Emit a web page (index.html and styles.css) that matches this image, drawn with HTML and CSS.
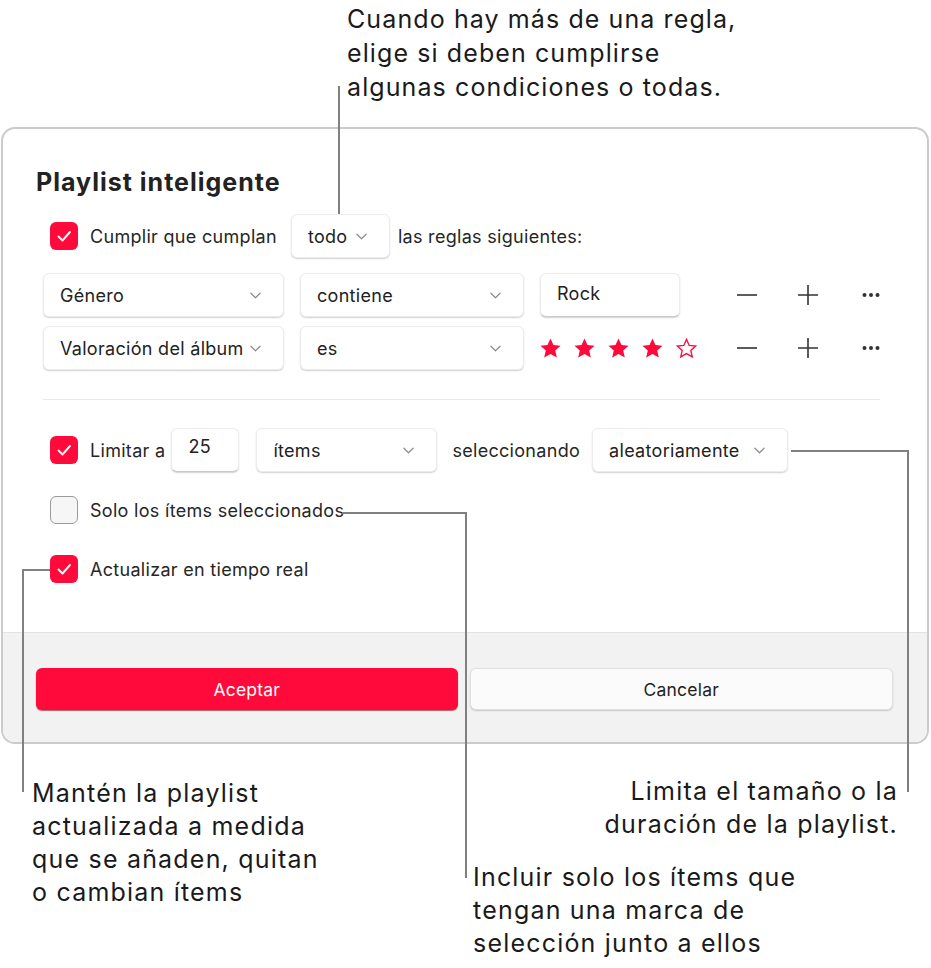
FILE: index.html
```html
<!DOCTYPE html>
<html lang="es">
<head>
<meta charset="utf-8">
<title>Playlist inteligente</title>
<link rel="stylesheet" href="styles.css">
</head>
<body>
<div class="page">
  <div class="callout-top">Cuando hay más de una regla,<br>elige si deben cumplirse<br>algunas condiciones o todas.</div>

  <div class="dialog">
    <div class="main">
      <h1 class="title">Playlist inteligente</h1>

      <div class="row row-match">
        <span class="check on"><svg viewBox="0 0 28 28"><path d="M8.5 14.5l4 4 7.5-8.5"/></svg></span>
        <span class="label lbl-first">Cumplir que cumplan</span>
        <span class="select sel-todo"><span>todo</span><svg class="chev" viewBox="0 0 12 7"><path d="M1 1l5 5 5-5"/></svg></span>
        <span class="label lbl-rules">las reglas siguientes:</span>
      </div>

      <div class="rules">
        <div class="rule">
          <span class="select sel-field"><span>Género</span><svg class="chev" viewBox="0 0 12 7"><path d="M1 1l5 5 5-5"/></svg></span>
          <span class="select sel-op"><span>contiene</span><svg class="chev" viewBox="0 0 12 7"><path d="M1 1l5 5 5-5"/></svg></span>
          <span class="field field-rock">Rock</span>
          <span class="actions">
            <svg class="ico minus" viewBox="0 0 20 20"><path d="M0 10h20"/></svg>
            <svg class="ico plus" viewBox="0 0 20 20"><path d="M0 10h20M10 0v20"/></svg>
            <svg class="ico dots" viewBox="0 0 18 6"><circle cx="2.5" cy="3" r="2"/><circle cx="9" cy="3" r="2"/><circle cx="15.5" cy="3" r="2"/></svg>
          </span>
        </div>
        <div class="rule">
          <span class="select sel-field"><span>Valoración del álbum</span><svg class="chev" viewBox="0 0 12 7"><path d="M1 1l5 5 5-5"/></svg></span>
          <span class="select sel-op"><span>es</span><svg class="chev" viewBox="0 0 12 7"><path d="M1 1l5 5 5-5"/></svg></span>
          <span class="stars">
            <svg class="star" viewBox="0 0 24 24"><path d="M12 1.5l3.1 6.9 7.4.7-5.6 5 1.7 7.4L12 17.7l-6.6 3.8 1.7-7.4-5.6-5 7.4-.7z"/></svg>
            <svg class="star" viewBox="0 0 24 24"><path d="M12 1.5l3.1 6.9 7.4.7-5.6 5 1.7 7.4L12 17.7l-6.6 3.8 1.7-7.4-5.6-5 7.4-.7z"/></svg>
            <svg class="star" viewBox="0 0 24 24"><path d="M12 1.5l3.1 6.9 7.4.7-5.6 5 1.7 7.4L12 17.7l-6.6 3.8 1.7-7.4-5.6-5 7.4-.7z"/></svg>
            <svg class="star" viewBox="0 0 24 24"><path d="M12 1.5l3.1 6.9 7.4.7-5.6 5 1.7 7.4L12 17.7l-6.6 3.8 1.7-7.4-5.6-5 7.4-.7z"/></svg>
            <svg class="star empty" viewBox="0 0 24 24"><path d="M12 2.5l2.8 6.3 6.8.6-5.1 4.6 1.5 6.8L12 17.3l-6 3.5 1.5-6.8-5.1-4.6 6.8-.6z"/></svg>
          </span>
          <span class="actions">
            <svg class="ico minus" viewBox="0 0 20 20"><path d="M0 10h20"/></svg>
            <svg class="ico plus" viewBox="0 0 20 20"><path d="M0 10h20M10 0v20"/></svg>
            <svg class="ico dots" viewBox="0 0 18 6"><circle cx="2.5" cy="3" r="2"/><circle cx="9" cy="3" r="2"/><circle cx="15.5" cy="3" r="2"/></svg>
          </span>
        </div>
      </div>

      <div class="sep"></div>

      <div class="row row-limit">
        <span class="check on"><svg viewBox="0 0 28 28"><path d="M8.5 14.5l4 4 7.5-8.5"/></svg></span>
        <span class="label lbl-first">Limitar a</span>
        <span class="field field-num">25</span>
        <span class="select sel-items"><span>ítems</span><svg class="chev" viewBox="0 0 12 7"><path d="M1 1l5 5 5-5"/></svg></span>
        <span class="label lbl-sel">seleccionando</span>
        <span class="select sel-random"><span>aleatoriamente</span><svg class="chev" viewBox="0 0 12 7"><path d="M1 1l5 5 5-5"/></svg></span>
      </div>

      <div class="row row-check row-solo">
        <span class="check off"></span>
        <span class="label lbl-first">Solo los ítems seleccionados</span>
      </div>

      <div class="row row-check row-live">
        <span class="check on"><svg viewBox="0 0 28 28"><path d="M8.5 14.5l4 4 7.5-8.5"/></svg></span>
        <span class="label lbl-first">Actualizar en tiempo real</span>
      </div>
    </div>

    <div class="footer">
      <button class="btn btn-ok">Aceptar</button>
      <button class="btn btn-cancel">Cancelar</button>
    </div>
  </div>

  <div class="note note-live">Mantén la playlist<br>actualizada a medida<br>que se añaden, quitan<br>o cambian ítems</div>
  <div class="note note-limit">Limita el tamaño o la<br>duración de la playlist.</div>
  <div class="note note-solo">Incluir solo los ítems que<br>tengan una marca de<br>selección junto a ellos</div>

  <span class="ln ln-top"></span>
  <span class="ln ln-live-h"></span>
  <span class="ln ln-live-v"></span>
  <span class="ln ln-solo-h"></span>
  <span class="ln ln-solo-v"></span>
  <span class="ln ln-lim-h"></span>
  <span class="ln ln-lim-v"></span>
</div>
</body>
</html>
```

FILE: styles.css
```css
* { box-sizing: border-box; }
html, body { margin: 0; padding: 0; background: #fff; }
body {
  font-family: Inter, "Noto Sans", "Liberation Sans", sans-serif;
  color: #1f1f1f;
}
.page { position: relative; width: 931px; height: 968px; overflow: hidden; }

.callout-top {
  height: 127px;
  padding: 2px 0 0 347px;
  font-size: 25px;
  line-height: 34px;
  color: #1a1a1a;
  letter-spacing: 1.1px;
}

.dialog {
  margin-left: 1px;
  width: 928px;
  border: 2px solid #cbcbcb;
  border-radius: 14px;
  overflow: hidden;
  background: #fff;
}
.main { padding: 38px 0 49px 0; }

.title {
  margin: 0 0 0 33px;
  font-size: 25px;
  line-height: 30px;
  font-weight: 700;
  color: #222;
  letter-spacing: 1px;
}

.row { display: flex; align-items: center; }
.label { font-size: 18px; letter-spacing: 0.3px; color: #262626; white-space: nowrap; }
.lbl-first { margin-left: 12px; }

.row-match { margin: 17px 0 0 47px; height: 44px; }
.sel-todo { margin-left: 14px; width: 99px; }
.lbl-rules { margin-left: 8px; }

.check {
  width: 28px; height: 28px; border-radius: 6px;
  display: inline-flex; align-items: center; justify-content: center;
  flex: none;
}
.check.on { background: #ff0a3a; }
.check.on svg { width: 28px; height: 28px; fill: none; stroke: #fff; stroke-width: 1.9; stroke-linecap: round; stroke-linejoin: round; }
.check.off { background: #f6f6f6; border: 1.5px solid #9a9a9a; }

.select, .field {
  height: 44px;
  background: #fff;
  border-radius: 6px;
  border: 1px solid #ececec;
  box-shadow: 0 1px 1.5px rgba(0,0,0,0.18);
  display: inline-flex; align-items: center;
  font-size: 18px; letter-spacing: 0.3px; color: #222;
  flex: none;
  white-space: nowrap;
}
.select { justify-content: space-between; padding: 0 22px 0 16px; }
.chev { width: 11px; height: 7px; fill: none; stroke: #8c8c8c; stroke-width: 1.3; stroke-linecap: round; stroke-linejoin: round; flex: none; }

.rules { margin: 15px 0 0 40px; display: flex; flex-direction: column; gap: 9px; }
.rule { display: flex; align-items: center; height: 44px; }
.sel-field { width: 241px; }
.sel-op { width: 224px; margin-left: 16px; }
.field-rock { width: 140px; margin-left: 16px; padding: 0 16px 3px; border-bottom-color: #c9c9c9; }

.stars { display: flex; margin-left: 15px; width: 197px; gap: 11px; }
.star { width: 23px; height: 23px; fill: #ff0a3a; flex: none; }
.star.empty { fill: none; stroke: #ff0a3a; stroke-width: 1.4; stroke-linejoin: miter; }

.actions { display: flex; align-items: center; margin-left: auto; margin-right: 47px; }
.ico { flex: none; }
.minus, .plus { width: 20px; height: 20px; fill: none; stroke: #333; stroke-width: 1.6; }
.plus { margin-left: 41px; }
.dots { width: 18px; height: 6px; fill: #333; margin-left: 44px; }

.sep { margin: 29px 47px 0 40px; height: 1px; background: #e9e9e9; }

.row-limit { margin: 28px 0 0 47px; height: 44px; }
.field-num { width: 68px; margin-left: 6px; padding: 0 16px 8px; border-bottom-color: #c9c9c9; }
.sel-items { width: 181px; margin-left: 17px; }
.lbl-sel { margin-left: 15px; }
.sel-random { width: 196px; margin-left: 12px; }

.row-check { margin-left: 47px; height: 28px; }
.row-solo { margin-top: 24px; }
.row-live { margin-top: 31px; }

.footer {
  border-top: 1px solid #e3e3e3;
  background: #f2f2f2;
  padding: 35px 34px 32px 33px;
  display: flex; gap: 12px;
}
.btn {
  height: 42px; border-radius: 6px;
  font-family: inherit; font-size: 17.5px; letter-spacing: 0.2px;
  flex: 1 1 0;
  cursor: default;
}
.btn-ok {
  background: #ff0a3a; color: #fff;
  border: none;
  box-shadow: 0 1px 1px rgba(120,0,20,0.6);
}
.btn-cancel {
  background: #fbfbfb; color: #222;
  border: 1px solid #e0e0e0;
  box-shadow: 0 1px 1.5px rgba(0,0,0,0.18);
}

.note {
  position: absolute;
  font-size: 25px; line-height: 33px; color: #1a1a1a;
  letter-spacing: 1.2px;
  white-space: nowrap;
}
.note-live { left: 32px; top: 777px; }
.note-limit { right: 33px; top: 775px; text-align: right; }
.note-solo { left: 473px; top: 861px; }

.ln { position: absolute; background: #808080; }
.ln-top { left: 338px; top: 86px; width: 2px; height: 128px; }
.ln-live-h { left: 22px; top: 569px; width: 28px; height: 2px; }
.ln-live-v { left: 22px; top: 569px; width: 2px; height: 223px; }
.ln-solo-h { left: 342px; top: 512px; width: 125px; height: 2px; }
.ln-solo-v { left: 465px; top: 512px; width: 2px; height: 366px; }
.ln-lim-h { left: 791px; top: 450px; width: 118px; height: 2px; }
.ln-lim-v { left: 907px; top: 450px; width: 2px; height: 342px; }
```
